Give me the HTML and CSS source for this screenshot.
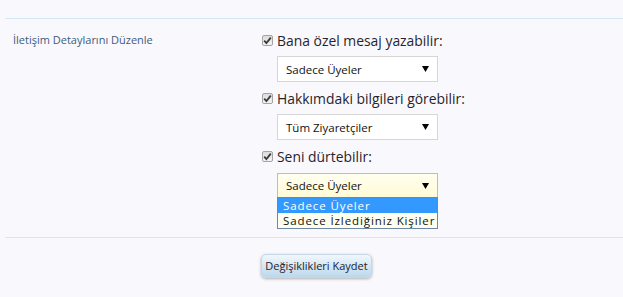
FILE: index.html
```html
<!DOCTYPE html>
<html lang="tr">
<head>
<meta charset="utf-8">
<title>İletişim Detayları</title>
<link rel="stylesheet" href="styles.css">
</head>
<body>
<div class="page">
  <div class="rule"></div>
  <div class="row">
    <div class="row-label">İletişim Detaylarını Düzenle</div>
    <div class="fields">
      <div class="field">
        <div class="check-line">
          <span class="check"><svg viewBox="0 0 11 11" width="11" height="11"><path d="M2.2 5.6 L4.4 8 L8.8 2.6" fill="none" stroke="#3a3a3a" stroke-width="1.8"/></svg></span>
          <span class="check-text">Bana özel mesaj yazabilir:</span>
        </div>
        <div class="select"><span>Sadece Üyeler</span><svg class="arrow" viewBox="0 0 7 6" width="7" height="6"><path d="M0 0 H7 L3.5 6 Z" fill="#000"/></svg></div>
      </div>
      <div class="field">
        <div class="check-line">
          <span class="check"><svg viewBox="0 0 11 11" width="11" height="11"><path d="M2.2 5.6 L4.4 8 L8.8 2.6" fill="none" stroke="#3a3a3a" stroke-width="1.8"/></svg></span>
          <span class="check-text">Hakkımdaki bilgileri görebilir:</span>
        </div>
        <div class="select"><span>Tüm Ziyaretçiler</span><svg class="arrow" viewBox="0 0 7 6" width="7" height="6"><path d="M0 0 H7 L3.5 6 Z" fill="#000"/></svg></div>
      </div>
      <div class="field">
        <div class="check-line">
          <span class="check"><svg viewBox="0 0 11 11" width="11" height="11"><path d="M2.2 5.6 L4.4 8 L8.8 2.6" fill="none" stroke="#3a3a3a" stroke-width="1.8"/></svg></span>
          <span class="check-text">Seni dürtebilir:</span>
        </div>
        <div class="select-wrap">
          <div class="select open"><span>Sadece Üyeler</span><svg class="arrow" viewBox="0 0 7 6" width="7" height="6"><path d="M0 0 H7 L3.5 6 Z" fill="#000"/></svg></div>
          <ul class="menu">
            <li class="active">Sadece Üyeler</li>
            <li>Sadece İzlediğiniz Kişiler</li>
          </ul>
        </div>
      </div>
    </div>
  </div>
  <div class="rule"></div>
  <div class="actions">
    <button class="save" type="button">Değişiklikleri Kaydet</button>
  </div>
</div>
</body>
</html>
```

FILE: styles.css
```css
html, body {
  margin: 0;
  padding: 0;
  background: #f9f9fd;
}
body {
  font-family: "Open Sans", "Noto Sans", "DejaVu Sans", sans-serif;
  color: #222;
  width: 623px;
  height: 297px;
  overflow: hidden;
}
.page {
  padding: 18px 0 0 5px;
}
.rule {
  height: 1px;
  background: #d3e8f5;
}
.row {
  display: flex;
  padding: 11px 0 39px 8px;
}
.row-label {
  width: 249px;
  flex: none;
  font-size: 11px;
  line-height: 20px;
  color: #3d5b80;
}
.fields {
  display: flex;
  flex-direction: column;
}
.field {
  display: flex;
  flex-direction: column;
  margin-bottom: 6px;
}
.field:last-child {
  margin-bottom: 0;
}
.check-line {
  display: flex;
  align-items: center;
  height: 20px;
  margin-bottom: 6px;
}
.check {
  width: 11px;
  height: 11px;
  box-sizing: border-box;
  border: 1px solid #a4a4a4;
  border-radius: 2px;
  background: linear-gradient(#dcdcdc, #f4f4f4);
  display: flex;
  align-items: center;
  justify-content: center;
  margin-right: 4px;
}
.check svg {
  display: block;
  flex: none;
}
.check-text {
  font-size: 13.9px;
  color: #2a1f2c;
}
.select {
  margin-left: 15px;
  width: 161px;
  height: 26px;
  box-sizing: border-box;
  border: 1px solid #d6d6d6;
  background: #fff;
  display: flex;
  align-items: center;
  justify-content: space-between;
  padding: 0 8px 0 8px;
  font-size: 11.5px;
  color: #111;
}
.arrow {
  display: block;
}
.select-wrap {
  position: relative;
}
.select.open {
  border-color: #bdbdbd;
  background: linear-gradient(#fffff0, #fffbd6);
  height: 25px;
  margin-top: 1px;
}
.menu {
  position: absolute;
  left: 15px;
  top: 25px;
  width: 161px;
  box-sizing: border-box;
  margin: 0;
  padding: 0;
  list-style: none;
  border: 1px solid #6d88a6;
  background: #fffff0;
  font-size: 11.5px;
  letter-spacing: 0.9px;
}
.menu li {
  height: 15px;
  line-height: 15px;
  padding-left: 5px;
  color: #111;
  white-space: nowrap;
}
.menu li.active {
  background: #3399ff;
  color: #fff;
}
.actions {
  padding: 15px 0 0 256px;
}
.save {
  width: 111px;
  height: 24px;
  border: 1px solid #c6d6e4;
  border-radius: 5px;
  background: linear-gradient(#f0f7fd, #bcd8ec);
  box-shadow: 0 1px 3px rgba(0, 0, 0, 0.3);
  font-family: "Open Sans", "Noto Sans", sans-serif;
  font-size: 11px;
  color: #1d1d2a;
  padding: 0;
}
```
